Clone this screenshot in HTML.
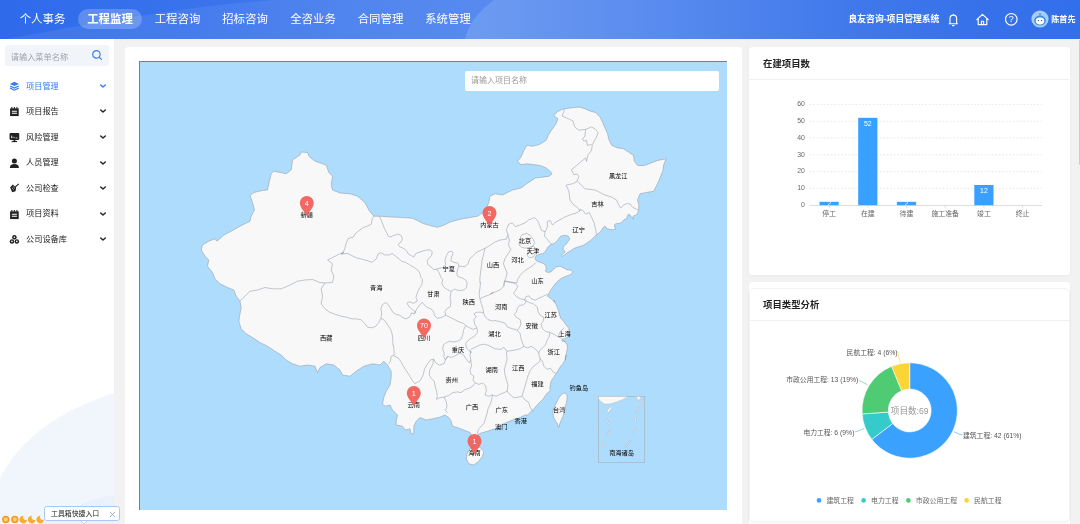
<!DOCTYPE html>
<html lang="zh-CN">
<head>
<meta charset="utf-8">
<title>良友咨询-项目管理系统</title>
<style>
*{box-sizing:border-box;margin:0;padding:0}
html,body{width:1080px;height:524px;overflow:hidden;background:#f2f2f2;font-family:"Liberation Sans","Noto Sans CJK SC",sans-serif;}
.abs{position:absolute}
#hdr{position:absolute;left:0;top:0;width:1080px;height:39.4px;overflow:hidden;background:#3a73ea}
#hdr svg{position:absolute;left:0;top:0}
.nav{position:absolute;top:0;height:39px;line-height:39.3px;color:#fff;font-size:11.4px;white-space:nowrap;transform:translateX(-50%);letter-spacing:0}
.pill{position:absolute;left:78.2px;top:9.3px;width:63.6px;height:20px;border-radius:10px;background:rgba(255,255,255,.22)}
.sys{position:absolute;left:848.5px;top:0;line-height:39px;color:#fff;font-weight:bold;font-size:8.8px;white-space:nowrap}
.uname{position:absolute;left:1051.2px;top:0;line-height:39px;color:#fff;font-weight:bold;font-size:8.1px;white-space:nowrap}
#side{position:absolute;left:0;top:39px;width:114px;height:485px;background:#fff;overflow:hidden}
.sbox{position:absolute;left:5.1px;top:6.2px;width:103.8px;height:20.6px;border-radius:3px;background:#f1f4f9}
.sbox span{position:absolute;left:5.7px;top:2.7px;line-height:20px;font-size:8.2px;color:#a0a3aa;white-space:nowrap}
.mi{position:absolute;left:25.8px;font-size:8.2px;color:#222;white-space:nowrap;line-height:12px}
.mi.act{color:#3a7bf0}
#main{position:absolute;left:124.9px;top:47.1px;width:617.3px;height:490px;background:#fff;border-radius:3.5px}
#map{position:absolute;left:139px;top:61px;width:588px;height:449px;background:#aedcfc;border-top:1px solid #7d7d7d;border-left:1px solid #7d7d7d;overflow:hidden}
.minput{position:absolute;left:464.8px;top:70.7px;width:253.7px;height:20.2px;background:#fff;border-radius:2px}
.minput span{position:absolute;left:6px;top:0.2px;line-height:20px;font-size:8px;color:#9a9a9a;white-space:nowrap}
.card{position:absolute;left:748.7px;width:321px;background:#fff;border-radius:3.5px;box-shadow:0 1px 3px rgba(0,0,0,.04)}
.ctitle{position:absolute;left:14px;font-size:9.4px;font-weight:bold;color:#222;white-space:nowrap;line-height:14px}
.sep{position:absolute;left:0;width:320px;height:1px;background:#f0f0f0}
#sb{position:absolute;left:1078.5px;top:40px;width:1.5px;height:125px;background:#cdcdcd;border-radius:1px 0 0 1px}
#sb i{display:none}
body>*{will-change:transform}
svg text{font-family:"Liberation Sans","Noto Sans CJK SC",sans-serif}
</style>
</head>
<body>
<!-- HEADER -->
<div id="hdr">
<svg width="1080" height="40" viewBox="0 0 1080 40">
<defs>
<linearGradient id="hg" x1="0" x2="1" y1="0" y2="0">
<stop offset="0" stop-color="#2e6aeb"/><stop offset="0.2" stop-color="#3a74ec"/><stop offset="0.43" stop-color="#4b81ee"/><stop offset="1" stop-color="#4b81ee"/>
</linearGradient>
<linearGradient id="hg2" gradientUnits="userSpaceOnUse" x1="465" x2="1080" y1="0" y2="0">
<stop offset="0" stop-color="#6e9bf1"/><stop offset="0.3" stop-color="#5a8cef"/><stop offset="0.62" stop-color="#4179eb"/><stop offset="0.85" stop-color="#3671ea"/><stop offset="1" stop-color="#326fea"/>
</linearGradient>
</defs>
<rect width="1080" height="40" fill="url(#hg)"/>
<path d="M0 40 C60 30 150 10 272 0 L494 0 L494 40 Z" fill="#fff" fill-opacity="0.07"/>
<path d="M494 0 Q469 18 465 40 L1080 40 L1080 0 Z" fill="url(#hg2)"/>
</svg>
<div class="pill"></div>
<div class="nav" style="left:42.5px">个人事务</div>
<div class="nav" style="left:110px;font-weight:bold">工程监理</div>
<div class="nav" style="left:177.5px">工程咨询</div>
<div class="nav" style="left:245px">招标咨询</div>
<div class="nav" style="left:313px">全咨业务</div>
<div class="nav" style="left:380.5px">合同管理</div>
<div class="nav" style="left:448px">系统管理</div>
<div class="sys">良友咨询-项目管理系统</div>
<svg style="left:945px;top:10px" width="80" height="20" viewBox="0 0 80 20" fill="none" stroke="#fff" stroke-width="1.15" stroke-linejoin="round" stroke-linecap="round">
<path d="M5 13.6 V8.4 a3.3 3.3 0 0 1 6.6 0 V13.6 M4.2 13.7 H12.4 M7.5 15.6 H9.1 M8.3 4.2 V5"/>
<path d="M31.8 9.6 L37.5 4.4 L43.2 9.6 M33.2 8.6 V14.6 H41.8 V8.6 M36.4 14.6 V11.2 H38.6 V14.6"/>
<circle cx="66.3" cy="9.3" r="5.8"/>
</svg>
<div class="abs" style="left:1007.3px;top:3.2px;width:8px;text-align:center;color:#fff;font-size:9px;line-height:32px">?</div>
<svg style="left:1031px;top:10.3px" width="18" height="18" viewBox="0 0 18 18">
<circle cx="9" cy="9" r="8.6" fill="#a8cdf8"/>
<ellipse cx="9" cy="10.6" rx="5.8" ry="5" fill="#3f8fe8"/>
<ellipse cx="9" cy="11" rx="4.2" ry="3.4" fill="#fff"/>
<circle cx="7.4" cy="10.6" r="0.7" fill="#345"/><circle cx="10.6" cy="10.6" r="0.7" fill="#345"/>
<circle cx="9" cy="4.2" r="1.2" fill="#5aa4f0"/>
</svg>
<div class="uname">陈首先</div>
</div>

<!-- SIDEBAR -->
<div id="side">
<svg class="abs" style="left:0;top:0" width="114" height="485" viewBox="0 0 114 485">
<path d="M0 485 L0 439 Q30 381 114 354 L114 485 Z" fill="#f1f6fd"/>
<path d="M40 485 C60 472 90 460 114 456 L114 485 Z" fill="#e9f1fc"/>
</svg>
<div class="sbox"><span>请输入菜单名称</span>
<svg class="abs" style="left:86.3px;top:4.2px" width="12" height="12" viewBox="0 0 12 12" fill="none" stroke="#3a7bf0" stroke-width="1.2"><circle cx="5.4" cy="5.4" r="3.7"/><path d="M8.2 8.2 L10.4 10.4" stroke-linecap="round"/></svg>
</div>
</div>
<svg class="abs" style="left:9.1px;top:80.85px" width="10.8" height="10.8" viewBox="0 0 12 12" fill="#3a7bf0"><path d="M6 0.8 L11 3.2 L6 5.6 L1 3.2 Z"/><path d="M1.2 5.5 L6 7.8 L10.8 5.5 M1.2 7.9 L6 10.2 L10.8 7.9" fill="none" stroke="#3a7bf0" stroke-width="1.3"/></svg>
<div class="mi act" style="top:80.55px">项目管理</div>
<svg class="abs" style="left:99.3px;top:81.85px" width="8" height="8" viewBox="0 0 8 8" fill="none" stroke="#3a7bf0" stroke-width="1.4" stroke-linecap="round" stroke-linejoin="round"><path d="M1.7 2.9 L4 5.1 L6.3 2.9"/></svg>
<svg class="abs" style="left:9.1px;top:106.40px" width="10.8" height="10.8" viewBox="0 0 12 12" fill="#222"><path d="M1.2 2.6 H10.8 V11.2 H1.2 Z"/><path d="M3.2 1.2 V3 M6 1.2 V3 M8.8 1.2 V3" stroke="#222" stroke-width="1.2"/><path d="M3.2 5.8 H8.8 M3.2 8 H8.8" stroke="#fff" stroke-width="1.2"/></svg>
<div class="mi" style="top:106.10px">项目报告</div>
<svg class="abs" style="left:99.3px;top:107.40px" width="8" height="8" viewBox="0 0 8 8" fill="none" stroke="#222" stroke-width="1.4" stroke-linecap="round" stroke-linejoin="round"><path d="M1.7 2.9 L4 5.1 L6.3 2.9"/></svg>
<svg class="abs" style="left:9.1px;top:131.95px" width="10.8" height="10.8" viewBox="0 0 12 12" fill="#222"><rect x="0.6" y="1" width="10.8" height="7.8" rx="1.2"/><path d="M3 10.6 H9" stroke="#222" stroke-width="1.3"/><path d="M5 8.6 H7 V10.4 H5 Z"/><path d="M2.8 6.8 V4 M4.4 6.8 V5 M6 6.8 V5.8 M7.4 6.6 H9.4" stroke="#fff" stroke-width="0.8"/></svg>
<div class="mi" style="top:131.65px">风险管理</div>
<svg class="abs" style="left:99.3px;top:132.95px" width="8" height="8" viewBox="0 0 8 8" fill="none" stroke="#222" stroke-width="1.4" stroke-linecap="round" stroke-linejoin="round"><path d="M1.7 2.9 L4 5.1 L6.3 2.9"/></svg>
<svg class="abs" style="left:9.1px;top:157.50px" width="10.8" height="10.8" viewBox="0 0 12 12" fill="#222"><circle cx="6" cy="3.4" r="2.8"/><path d="M1 11 Q1 6.8 6 6.8 Q11 6.8 11 11 Z"/></svg>
<div class="mi" style="top:157.20px">人员管理</div>
<svg class="abs" style="left:99.3px;top:158.50px" width="8" height="8" viewBox="0 0 8 8" fill="none" stroke="#222" stroke-width="1.4" stroke-linecap="round" stroke-linejoin="round"><path d="M1.7 2.9 L4 5.1 L6.3 2.9"/></svg>
<svg class="abs" style="left:9.1px;top:183.05px" width="10.8" height="10.8" viewBox="0 0 12 12" fill="#222"><path d="M1.2 5 L4.2 1.8 L8 5.4 L7.2 9.2 L3.6 10.4 Z"/><path d="M6.2 5.2 L10.8 1" stroke="#222" stroke-width="1.3" fill="none"/><path d="M3.2 5.4 L5.2 7.4 M4.6 4 L6.4 5.8" stroke="#fff" stroke-width="0.7"/></svg>
<div class="mi" style="top:182.75px">公司检查</div>
<svg class="abs" style="left:99.3px;top:184.05px" width="8" height="8" viewBox="0 0 8 8" fill="none" stroke="#222" stroke-width="1.4" stroke-linecap="round" stroke-linejoin="round"><path d="M1.7 2.9 L4 5.1 L6.3 2.9"/></svg>
<svg class="abs" style="left:9.1px;top:208.60px" width="10.8" height="10.8" viewBox="0 0 12 12" fill="#222"><path d="M1.2 2.6 H10.8 V11.2 H1.2 Z"/><path d="M3.2 1.2 V3 M6 1.2 V3 M8.8 1.2 V3" stroke="#222" stroke-width="1.2"/><path d="M3.2 5.8 H8.8 M3.2 8 H8.8" stroke="#fff" stroke-width="1.2"/></svg>
<div class="mi" style="top:208.30px">项目资料</div>
<svg class="abs" style="left:99.3px;top:209.60px" width="8" height="8" viewBox="0 0 8 8" fill="none" stroke="#222" stroke-width="1.4" stroke-linecap="round" stroke-linejoin="round"><path d="M1.7 2.9 L4 5.1 L6.3 2.9"/></svg>
<svg class="abs" style="left:9.1px;top:234.15px" width="10.8" height="10.8" viewBox="0 0 12 12" fill="#222"><circle cx="6" cy="3.6" r="2.5"/><circle cx="3.3" cy="8.2" r="2.5"/><circle cx="8.7" cy="8.2" r="2.5"/><circle cx="6" cy="3.6" r="0.9" fill="#fff"/><circle cx="3.3" cy="8.2" r="0.9" fill="#fff"/><circle cx="8.7" cy="8.2" r="0.9" fill="#fff"/></svg>
<div class="mi" style="top:233.85px">公司设备库</div>
<svg class="abs" style="left:99.3px;top:235.15px" width="8" height="8" viewBox="0 0 8 8" fill="none" stroke="#222" stroke-width="1.4" stroke-linecap="round" stroke-linejoin="round"><path d="M1.7 2.9 L4 5.1 L6.3 2.9"/></svg>
<svg class="abs" style="left:0;top:512px" width="50" height="12" viewBox="0 512 50 12">
<g fill="#f5992a"><circle cx="5.8" cy="519.4" r="3.7"/><circle cx="14.8" cy="519.4" r="3.7"/></g>
<g fill="#fcd05c"><circle cx="5.8" cy="519.4" r="2.1"/><circle cx="14.8" cy="519.4" r="2.1"/></g>
<g fill="#f8ac30">
<path d="M23.4 515.8 A3.8 3.8 0 1 0 27.0 519.4 A2.6 2.6 0 0 1 23.4 515.8 Z"/>
<path d="M31.9 515.8 A3.8 3.8 0 1 0 35.5 519.4 A2.6 2.6 0 0 1 31.9 515.8 Z"/>
<path d="M40.4 515.8 A3.8 3.8 0 1 0 44.0 519.4 A2.6 2.6 0 0 1 40.4 515.8 Z"/>
</g>
</svg>
<div class="abs" style="left:43.7px;top:506.3px;width:75.8px;height:15.2px;background:#fff;border:1px solid #a6c8f6;border-radius:2.5px"></div>
<div class="abs" style="left:50.8px;top:506.4px;line-height:15px;font-size:6.9px;color:#222;white-space:nowrap">工具箱快捷入口</div>
<svg class="abs" style="left:109px;top:510.6px" width="7" height="7" viewBox="0 0 7 7" stroke="#7d9fcb" stroke-width="0.8" fill="none"><path d="M0.9 0.9 L6.1 6.1 M6.1 0.9 L0.9 6.1"/></svg>
<svg class="abs" style="left:80px;top:520.6px" width="8" height="4" viewBox="0 0 8 4"><path d="M0.8 0 L4 2.8 L7.2 0" fill="#fff" stroke="#a6c8f6" stroke-width="0.8"/></svg>


<!-- MAIN -->
<div id="main"></div>
<div id="map"><svg class="abs" style="left:0;top:0" width="587" height="448" viewBox="0 0 587 448">
<g fill="#f8f8f8" stroke="#8f9ba8" stroke-width="0.55" stroke-linejoin="round">
<path d="M61.2 188.0 L62.5 183.0 L68.8 179.2 L75.0 176.8 L77.0 179.2 L83.8 173.0 L91.2 169.2 L100.0 164.2 L110.0 159.2 L111.2 154.2 L114.5 148.0 L112.5 140.5 L110.0 133.5 L113.8 130.5 L122.5 128.5 L127.5 128.0 L128.8 121.8 L131.2 111.8 L133.8 109.2 L146.2 111.8 L151.2 108.0 L152.5 98.0 L160.0 93.0 L161.2 90.0 L167.5 90.5 L168.8 94.2 L175.0 99.2 L186.2 103.0 L188.8 110.5 L192.5 114.2 L191.2 123.0 L192.5 128.0 L200.0 131.0 L210.0 131.8 L217.5 134.2 L225.0 140.5 L228.8 148.0 L233.8 154.2 L240.0 154.2 L250.0 155.0 L262.5 155.5 L270.0 156.0 L272.9 156.4 L277.4 158.6 L283.3 161.6 L290.8 163.8 L297.5 165.3 L304.2 163.1 L310.1 160.1 L317.6 157.9 L322.5 156.8 L337.5 154.2 L345.0 149.2 L348.8 140.5 L350.0 134.2 L355.0 131.8 L362.5 133.0 L372.5 128.0 L381.0 126.0 L385.2 122.8 L390.2 119.4 L395.3 116.1 L402.0 115.2 L408.7 114.4 L412.0 111.9 L410.4 109.4 L406.2 106.0 L400.3 103.5 L393.6 102.6 L386.9 101.8 L381.0 102.6 L377.6 99.3 L381.0 95.1 L383.5 89.2 L386.9 83.3 L392.7 84.2 L399.5 82.5 L406.2 78.3 L408.7 72.4 L412.0 67.4 L416.2 61.5 L417.9 56.5 L413.7 54.0 L417.1 49.8 L423.0 47.2 L430.5 45.9 L438.9 45.1 L443.9 46.4 L449.8 48.9 L455.7 50.6 L459.9 54.8 L462.4 59.8 L464.9 65.7 L467.5 71.6 L469.1 78.3 L471.7 83.3 L477.5 85.9 L483.4 86.7 L488.4 90.0 L493.5 93.4 L494.3 99.3 L497.7 103.5 L504.4 103.5 L511.1 101.0 L517.8 98.4 L526.2 96.8 L523.7 102.6 L522.9 108.5 L520.3 115.2 L517.8 121.1 L515.3 126.0 L513.8 129.2 L506.2 130.5 L500.0 131.8 L497.5 138.0 L498.8 142.6 L498.8 147.9 L497.6 151.0 L496.1 152.9 L493.4 154.0 L492.7 155.6 L493.4 157.1 L491.9 155.9 L490.4 153.3 L488.5 152.1 L487.3 154.0 L486.6 156.7 L483.9 157.8 L482.4 159.8 L479.7 161.3 L475.9 161.7 L474.4 162.8 L474.7 165.1 L475.9 167.0 L473.6 167.8 L470.2 167.4 L466.7 166.6 L466.0 165.1 L464.4 164.3 L462.9 165.9 L461.4 168.5 L459.1 170.8 L456.4 173.1 L453.7 175.4 L451.1 178.0 L449.8 179.0 L446.4 181.3 L443.0 183.6 L438.4 184.8 L433.8 186.5 L430.4 188.8 L426.9 191.1 L424.1 193.3 L421.8 194.5 L421.2 193.3 L424.1 191.1 L425.2 189.3 L422.9 187.6 L423.5 184.8 L425.8 182.5 L428.1 179.6 L429.8 176.7 L428.1 173.9 L424.7 173.3 L421.2 173.9 L418.9 176.2 L417.2 179.0 L414.4 181.3 L410.9 182.5 L408.1 184.8 L405.8 188.8 L402.9 191.6 L399.5 192.2 L396.0 193.9 L394.9 196.2 L396.0 198.5 L399.5 200.2 L403.5 201.4 L405.8 203.7 L406.3 207.1 L405.2 208.8 L407.5 210.5 L410.9 209.9 L413.8 207.1 L416.6 204.8 L420.1 204.2 L423.5 205.9 L426.9 207.7 L431.0 208.2 L432.7 209.9 L431.5 212.2 L428.1 213.4 L424.1 215.1 L420.7 216.8 L417.8 219.1 L415.5 221.4 L414.4 223.0 L410.0 229.2 L407.5 234.2 L411.2 236.8 L415.0 240.5 L413.8 238.0 L416.1 242.6 L418.4 248.3 L419.5 252.9 L420.7 256.3 L423.5 259.2 L425.8 262.6 L428.7 266.1 L429.2 269.5 L429.8 272.4 L428.1 274.6 L425.2 276.4 L422.4 277.5 L421.8 278.7 L424.7 279.8 L426.9 282.1 L427.5 284.9 L426.9 288.4 L426.4 291.8 L425.8 295.3 L425.2 298.0 L425.8 293.0 L425.3 297.6 L423.0 301.6 L420.1 305.0 L417.8 309.0 L415.5 312.5 L413.2 315.9 L411.0 319.3 L410.4 322.8 L409.8 326.2 L410.4 328.5 L407.5 330.8 L405.2 333.7 L403.5 336.5 L400.7 339.4 L397.8 342.2 L394.9 345.7 L392.1 348.5 L389.2 351.4 L387.5 353.0 L385.0 353.0 L380.0 355.5 L372.5 358.0 L366.2 360.5 L361.2 363.0 L355.0 366.8 L347.5 369.2 L341.2 371.0 L338.0 372.5 L337.0 378.0 L333.8 379.2 L332.0 374.2 L330.0 370.5 L323.8 368.0 L317.5 365.5 L312.5 364.2 L311.2 359.2 L308.8 355.5 L305.0 353.0 L298.8 355.5 L292.5 356.8 L286.2 358.0 L280.0 355.5 L276.2 359.2 L273.8 364.2 L273.8 371.8 L271.2 371.8 L270.0 366.8 L265.0 368.0 L262.5 364.2 L256.2 363.0 L256.2 359.2 L257.5 353.0 L252.5 348.0 L250.0 343.0 L245.0 344.2 L242.5 341.8 L243.8 335.5 L246.2 329.2 L250.0 323.0 L251.2 315.5 L251.2 309.2 L247.5 303.0 L243.8 299.2 L240.0 303.0 L232.5 301.8 L223.8 304.2 L216.2 309.2 L210.0 314.2 L202.5 313.0 L200.0 308.0 L193.8 303.0 L186.2 301.8 L180.0 305.5 L177.5 310.5 L175.0 304.2 L167.5 303.0 L160.0 304.2 L152.5 301.8 L146.2 298.0 L141.2 293.0 L135.0 289.2 L127.5 284.2 L120.0 280.5 L112.5 275.5 L106.2 271.8 L101.2 266.8 L98.8 259.2 L100.0 251.8 L101.2 245.5 L100.0 239.2 L96.2 234.2 L93.8 228.0 L87.5 225.5 L80.0 221.8 L75.0 216.8 L72.5 210.5 L67.5 204.2 L68.8 198.0 L65.0 194.2 Z"/>
<path d="M424.8 331.1 L426.7 332.5 L427.2 335.4 L426.5 340.2 L425.3 344.9 L424.4 349.7 L422.9 354.5 L421.0 358.8 L419.6 362.1 L419.1 365.0 L418.1 365.0 L417.7 362.1 L415.8 359.3 L413.9 355.9 L412.9 351.6 L413.4 347.8 L414.8 344.0 L416.7 340.2 L418.6 336.4 L421.0 333.0 L422.9 331.6 Z"/>
<path d="M333.8 385.0 L340.0 385.5 L343.8 389.2 L342.5 394.2 L338.8 399.2 L333.8 403.0 L328.8 401.8 L326.2 396.8 L327.5 390.5 L330.0 386.8 Z"/>
</g>
<g fill="none" stroke="#8f9ba8" stroke-width="0.55" stroke-linejoin="round">
<path d="M233.5 154.2 L232.0 157.9 L231.2 162.3 L226.0 164.6 L222.3 166.1 L218.6 169.0 L214.9 172.0 L213.4 175.0 L208.2 176.5 L206.0 181.7 L204.5 187.6 L201.5 192.1 L203.8 190.5"/>
<path d="M203.8 190.5 L201.5 192.1 L207.4 191.4 L211.9 193.6 L216.4 195.8 L222.3 197.3 L227.5 198.8 L232.0 200.3 L236.5 196.6 L237.9 192.1 L240.9 190.6 L244.6 192.9 L249.1 192.9 L252.1 191.4 L255.8 194.3 L259.5 197.3 L261.8 199.5 L265.5 200.3 L269.2 202.5 L272.9 204.8 L276.6 207.0 L279.6 210.7 L281.1 215.9 L282.6 217.5 L281.8 222.7 L278.9 227.1 L277.4 230.9 L275.9 235.3 L277.4 239.0 L273.7 241.3 L269.2 239.8 L267.0 241.3 L269.2 245.0 L272.9 248.0 L275.9 250.2 L274.4 251.7"/>
<path d="M239.4 154.2 L241.7 159.4 L243.9 165.3 L246.1 169.8 L248.4 174.2 L250.6 175.0 L253.6 173.5 L258.0 172.0 L261.0 173.5 L262.5 176.5 L261.0 180.2 L258.0 182.4 L259.5 184.7 L263.2 186.2 L266.2 188.4 L268.5 192.1 L271.4 193.6 L273.7 195.1 L275.9 191.4 L280.4 189.9 L284.8 188.4 L289.3 187.6 L292.3 189.9 L291.5 193.6 L289.3 195.8 L287.1 198.8 L287.8 202.5 L290.8 204.8 L293.8 207.7 L296.7 207.0"/>
<path d="M296.7 207.0 L302.7 205.5 L305.7 202.5 L304.9 198.1 L306.4 193.6 L308.6 189.9 L311.6 189.1 L313.1 191.4 L311.6 195.1 L310.9 198.8 L313.8 200.3 L317.6 201.0 L319.0 204.0 L317.6 207.7 L316.8 211.5 L317.6 214.4 L322.0 215.9 L325.7 218.1 L327.2 221.0 L327.2 221.2 L326.5 225.6 L324.3 227.9 L319.0 228.6 L314.6 227.1 L310.9 229.4"/>
<path d="M296.7 207.0 L299.0 210.7 L301.2 215.9 L302.7 217.5 L301.9 221.9 L304.2 225.6 L307.9 227.9 L310.9 229.4"/>
<path d="M319.0 204.0 L325.0 204.8 L328.0 201.8 L329.5 197.3 L332.4 194.3 L336.2 190.6 L340.6 188.4 L345.1 186.2 L350.3 183.2 L354.8 180.2 L360.0 178.0 L360.4 178.0 L366.4 177.2 L367.9 172.8 L366.4 167.6 L368.6 162.3 L372.3 160.9 L375.3 164.6 L379.8 163.1 L385.0 160.9 L388.7 157.9 L394.6 155.6 L397.6 158.6 L399.9 163.8 L401.3 168.3 L405.1 169.8 L407.3 165.3 L407.3 159.4 L410.3 158.6 L412.5 163.1 L415.5 160.1 L419.9 157.9 L425.1 154.9 L430.4 152.7 L435.6 151.2 L440.0 149.0"/>
<path d="M345.1 186.2 L343.6 192.1 L342.1 198.1 L341.4 204.0 L340.6 210.0 L339.9 215.9 L339.9 221.0 L340.6 220.4 L339.9 226.4 L339.1 232.3 L339.9 236.8"/>
<path d="M405.1 169.8 L404.3 174.2 L407.3 177.2 L409.5 180.2 L411.8 182.4"/>
<path d="M440.0 149.0 L440.0 147.2 L443.1 148.7 L445.7 152.1 L449.2 150.6 L451.5 155.2 L454.1 160.9 L456.4 170.8 L456.0 173.1"/>
<path d="M382.0 172.8 L386.5 171.3 L390.2 173.5 L393.2 177.2 L394.6 180.9 L393.2 183.9 L389.4 185.4 L385.7 186.2 L382.0 185.4 L379.0 183.2 L379.8 178.7 L380.5 175.0 L382.0 172.8"/>
<path d="M393.2 183.9 L395.4 186.2 L396.9 189.1 L395.4 192.1 L393.2 195.1 L389.4 195.8 L387.2 193.6 L387.9 189.9 L389.4 186.9 L393.2 183.9"/>
<path d="M367.9 172.8 L369.3 178.0 L368.6 183.2 L370.8 187.6 L367.9 192.1 L364.9 196.6 L363.4 201.8 L365.6 207.0 L367.1 211.5 L365.6 216.7 L364.1 221.0 L363.8 224.2"/>
<path d="M396.1 200.3 L393.2 203.3 L388.7 206.2 L384.2 209.2 L380.5 212.9 L377.5 217.4 L376.8 221.0 L364.6 219.0"/>
<path d="M274.4 251.7 L271.4 250.9 L269.9 254.7 L266.2 256.9 L262.5 255.4 L259.5 253.2 L255.8 252.4 L252.8 250.2 L250.6 246.5 L248.4 242.8 L245.4 240.5 L242.4 242.8 L240.9 246.5 L241.7 251.7 L240.9 256.2"/>
<path d="M240.9 256.2 L238.7 260.6 L235.7 264.3 L232.0 265.8 L227.5 265.1 L224.6 261.4 L220.8 257.6 L216.4 256.9 L211.9 256.9 L207.4 255.4 L203.0 254.7 L200.0 253.9 L197.5 253.0 L190.0 250.5 L185.0 246.8 L181.2 241.8 L182.5 234.2 L181.2 226.8 L185.0 221.0"/>
<path d="M100.0 239.2 L110.0 229.2 L117.5 228.0 L125.0 225.5 L132.5 226.8 L141.2 226.8 L150.0 223.0 L157.5 219.2 L165.0 218.0 L172.5 217.5 L180.0 220.5 L185.0 221.0"/>
<path d="M185.0 221.0 L192.5 220.5 L193.8 214.2 L191.2 208.0 L192.5 201.8 L187.5 198.0 L192.5 195.5 L200.0 191.8 L203.8 190.5"/>
<path d="M240.9 256.2 L244.6 258.4 L247.6 262.9 L250.6 267.3 L252.1 271.8 L252.8 277.0 L252.8 282.9 L253.4 283.0 L254.1 289.0 L254.1 293.4 L251.2 294.2 L250.4 299.4 L248.6 301.6"/>
<path d="M274.4 251.7 L276.6 247.2 L279.6 242.8 L282.6 240.5 L284.8 243.5 L287.8 245.7 L291.5 247.2 L293.8 250.2 L294.5 253.9 L297.5 256.2 L301.9 255.4 L305.7 253.2"/>
<path d="M305.7 253.2 L304.9 249.5 L307.1 246.5 L310.1 245.0 L310.9 240.5 L310.1 236.1 L310.9 230.9 L310.9 229.4"/>
<path d="M305.7 253.2 L310.1 255.4 L314.6 257.6 L319.0 259.9 L323.5 261.4 L325.7 263.6 L329.5 265.8 L333.2 267.3 L336.9 265.8"/>
<path d="M336.9 265.8 L334.7 262.1 L333.9 257.6 L336.2 254.7 L333.9 251.7 L336.9 250.2 L340.6 250.2 L343.6 250.9 L342.9 246.5 L341.4 242.0 L339.9 236.8"/>
<path d="M339.9 236.8 L344.3 234.6 L348.8 233.1 L353.3 230.1 L350.4 232.3 L354.9 230.1 L360.1 227.9 L363.8 224.2 L364.6 219.0"/>
<path d="M364.6 219.0 L369.8 220.4 L375.0 221.2 L377.9 224.2 L375.7 227.9 L373.5 231.6 L376.5 234.6 L380.2 236.8 L384.6 237.6"/>
<path d="M384.6 237.6 L386.1 234.6 L389.1 233.8 L391.3 236.8 L395.1 238.3 L398.8 236.1 L402.5 234.6 L405.5 233.1 L407.7 232.3"/>
<path d="M384.6 237.6 L386.1 240.5 L383.2 242.8 L379.4 243.5 L377.2 246.5 L376.5 250.2 L374.2 252.4 L376.5 255.4 L380.2 257.6 L380.9 262.1 L379.4 265.8 L377.2 268.1"/>
<path d="M343.6 250.9 L345.1 254.7 L348.1 257.6 L352.5 259.1 L354.9 258.4 L360.8 259.9 L365.3 261.4 L367.5 265.1 L372.0 266.6 L377.2 268.1"/>
<path d="M377.2 268.1 L380.2 271.8 L380.9 276.2 L382.4 280.7 L383.9 284.4"/>
<path d="M384.6 237.6 L389.1 240.5 L393.6 242.0 L397.3 245.0 L398.0 249.5 L400.3 253.2 L404.0 255.4 L403.2 259.1 L401.0 262.1 L402.5 266.6 L405.5 269.5 L409.9 270.3"/>
<path d="M409.9 270.3 L414.4 272.5 L418.1 274.8 L421.1 276.2 L423.3 278.5 L425.6 280.0"/>
<path d="M418.1 274.8 L419.6 271.0 L421.8 268.1 L424.1 265.8"/>
<path d="M409.9 270.3 L409.2 274.8 L407.0 278.5 L405.5 282.9 L402.5 285.9 L399.5 288.9 L398.8 291.0 L398.9 293.0 L400.1 296.4 L402.4 299.3"/>
<path d="M383.9 284.4 L387.6 285.9 L391.3 284.4 L395.1 286.7 L398.8 291.0"/>
<path d="M383.9 284.4 L380.2 286.7 L375.0 288.1 L366.8 289.3 L363.8 285.2 L360.8 287.4 L354.9 286.7 L348.9 283.7 L344.5 282.2 L340.0 282.9 L336.9 284.4 L331.0 287.4 L329.5 288.9"/>
<path d="M325.7 263.6 L323.5 268.1 L322.8 272.5 L321.3 277.0 L317.6 279.2 L313.1 280.0 L309.4 279.2 L306.4 280.7 L303.4 282.9 L302.7 287.4 L304.2 291.0 L304.0 295.6 L305.5 297.9 L307.7 294.2"/>
<path d="M336.9 265.8 L337.6 270.3 L334.7 274.0 L331.0 276.2 L328.0 278.5 L325.7 281.5 L326.5 285.9 L329.5 288.9 L331.0 291.0 L330.8 289.0 L330.0 293.4 L330.8 297.9"/>
<path d="M254.1 294.2 L257.9 295.6 L260.8 299.4 L263.1 303.8 L266.0 308.3 L269.0 312.8 L272.0 318.0 L275.0 321.7 L280.2 318.7 L283.2 312.8 L284.6 306.8 L287.6 301.6 L290.6 297.9 L293.6 297.1"/>
<path d="M293.6 297.1 L295.8 300.9 L299.5 303.1 L304.0 301.6 L305.5 297.9 L307.7 294.2 L311.4 295.6 L315.9 293.4 L320.4 291.2 L323.3 292.7 L326.3 297.1 L329.3 300.9 L330.8 297.9"/>
<path d="M293.6 297.1 L292.8 302.3 L289.9 307.6 L289.1 312.8 L291.3 316.5 L294.3 319.5 L295.1 323.9 L296.5 329.1 L297.3 333.6 L296.5 337.3 L299.5 335.8 L304.0 335.1"/>
<path d="M304.0 335.1 L308.5 333.6 L312.9 330.6 L317.4 329.9 L321.1 330.6 L324.8 327.6 L329.3 326.2 L333.0 323.9 L335.2 320.9"/>
<path d="M335.2 320.9 L333.0 318.0 L333.8 314.2 L330.8 312.0 L330.0 308.3 L331.5 303.8 L330.8 297.9"/>
<path d="M335.2 320.9 L339.0 322.4 L342.7 320.9 L345.7 323.9 L346.4 329.1 L344.9 332.9 L348.6 334.3 L352.4 332.9"/>
<path d="M352.4 332.9 L351.6 338.1 L350.1 342.5 L347.9 347.0 L347.1 351.5 L345.7 355.9 L344.2 361.0 L338.0 368.0 L337.5 371.8"/>
<path d="M352.4 332.9 L356.1 334.3 L360.5 332.1 L364.3 330.6 L367.2 329.1"/>
<path d="M367.2 329.1 L368.0 323.2 L366.5 318.0 L365.0 312.8 L364.3 307.6 L365.7 302.3 L367.2 297.1 L366.5 291.9 L366.8 289.4"/>
<path d="M367.2 329.1 L370.2 332.9 L373.9 335.8 L378.4 335.1 L382.1 334.3"/>
<path d="M382.1 334.3 L383.6 329.1 L385.1 323.9 L386.6 318.7 L388.1 313.5 L390.3 308.3 L393.3 304.6 L397.0 301.6 L400.0 299.4 L400.1 296.4"/>
<path d="M402.4 299.3 L404.1 304.5 L406.9 307.3 L410.4 306.2 L413.2 310.2 L416.1 311.3"/>
<path d="M382.1 334.3 L385.1 338.1 L388.8 340.3 L390.0 345.1 L393.0 349.5"/>
<path d="M304.0 335.1 L306.2 339.5 L307.0 344.0 L305.5 348.5 L307.7 350.7"/>
<path d="M424.6 47.7 L422.1 54.0 L428.0 56.5 L433.0 59.0 L434.7 64.9 L438.9 68.2 L445.6 67.4 L451.5 64.9 L455.7 67.4 L458.2 70.7 L455.7 76.6 L452.3 82.5 L451.5 88.4 L448.1 92.6 L446.5 99.3 L445.6 95.9 L440.6 100.1 L435.6 104.3 L431.4 107.7 L433.9 112.7 L437.2 111.9 L438.9 114.4 L437.2 118.6 L437.5 119.2"/>
<path d="M445.6 67.4 L444.8 74.9 L442.3 76.6 L443.9 79.1 L446.5 78.3 L447.3 83.3 L451.5 82.5"/>
<path d="M437.5 119.2 L445.0 126.8 L455.0 128.0 L465.0 133.0 L471.2 135.0 L476.6 138.0 L478.2 141.8 L480.5 146.0 L483.5 143.3 L487.3 141.4 L490.4 142.2 L492.7 145.3 L496.5 147.2 L498.4 147.9"/>
<path d="M437.5 119.2 L432.5 121.8 L426.2 123.0 L428.8 129.2 L430.0 138.0 L433.8 143.0 L437.5 145.5 L440.0 149.0"/>
</g>
<rect x="458.4" y="334.4" width="46.3" height="66.1" fill="none" stroke="#a8b2bc" stroke-width="0.7"/>
<g fill="#f8f8f8" stroke="#b4b4b4" stroke-width="0.4">
<path d="M458.4 334.4 L488.2 334.4 L482.8 337.5 L476.0 340.2 L469.8 342.0 L464.5 342.0 L460.7 339.5 L458.4 336.4 Z"/>
<path d="M495.8 334.4 L501.1 334.4 L498.9 339.0 Z"/>
<path d="M466.5 349.7 L470.2 344.8 L471.7 346.0 L468.6 350.3 Z"/>
</g>
<g stroke="#aab4be" stroke-width="1.5" stroke-linecap="round">
<path d="M466.8 357.0 L468.6 361.6"/>
<path d="M467.1 372.3 L470.6 368.0"/>
<path d="M462.5 380.7 L464.5 384.5"/>
<path d="M485.4 384.5 L490.0 378.7"/>
<path d="M493.2 370.7 L496.1 366.2"/>
<path d="M495.5 359.3 L495.8 354.7"/>
<path d="M495.8 350.1 L499.2 345.6"/>
<path d="M500.4 343.3 L503.7 337.9"/>
</g>
<g stroke="#f4f4f4" stroke-width="0.8" stroke-linecap="round">
<path d="M466.8 357.0 L468.6 361.6"/>
<path d="M467.1 372.3 L470.6 368.0"/>
<path d="M462.5 380.7 L464.5 384.5"/>
<path d="M485.4 384.5 L490.0 378.7"/>
<path d="M493.2 370.7 L496.1 366.2"/>
<path d="M495.5 359.3 L495.8 354.7"/>
<path d="M495.8 350.1 L499.2 345.6"/>
<path d="M500.4 343.3 L503.7 337.9"/>
</g>
<g font-size="6.2" fill="#000" text-anchor="middle">
<text x="166.8" y="155.3">新疆</text>
<text x="349.5" y="165.3">内蒙古</text>
<text x="478.2" y="116.0">黑龙江</text>
<text x="457.5" y="144.3">吉林</text>
<text x="438.8" y="170.3">辽宁</text>
<text x="385.0" y="181.1">北京</text>
<text x="393.0" y="191.1">天津</text>
<text x="377.5" y="199.6">河北</text>
<text x="353.0" y="205.3">山西</text>
<text x="308.8" y="209.1">宁夏</text>
<text x="397.5" y="221.1">山东</text>
<text x="293.5" y="234.1">甘肃</text>
<text x="328.8" y="242.1">陕西</text>
<text x="361.2" y="246.6">河南</text>
<text x="410.8" y="254.6">江苏</text>
<text x="391.8" y="266.1">安徽</text>
<text x="236.2" y="227.8">青海</text>
<text x="186.2" y="278.3">西藏</text>
<text x="284.0" y="277.8">四川</text>
<text x="354.5" y="274.1">湖北</text>
<text x="424.5" y="274.1">上海</text>
<text x="413.8" y="292.1">浙江</text>
<text x="318.0" y="289.6">重庆</text>
<text x="351.8" y="310.3">湖南</text>
<text x="378.2" y="307.8">江西</text>
<text x="397.5" y="324.1">福建</text>
<text x="311.8" y="319.6">贵州</text>
<text x="332.0" y="347.3">广西</text>
<text x="361.8" y="350.3">广东</text>
<text x="380.8" y="361.1">香港</text>
<text x="361.2" y="367.3">澳门</text>
<text x="419.2" y="349.8">台湾</text>
<text x="438.8" y="327.8">钓鱼岛</text>
<text x="273.8" y="345.3">云南</text>
<text x="334.5" y="393.3">海南</text>
<text x="481.5" y="393.3">南海诸岛</text>
</g>
<path d="M166.8 154.3 C165.2 150.2 159.8 145.5 159.8 140.9 A7 7 0 1 1 173.8 140.9 C173.8 145.5 168.3 150.2 166.8 154.3 Z" fill="#f1605a" fill-opacity="0.94"/>
<text x="166.8" y="143.8" font-size="7.2" fill="#fff" text-anchor="middle">4</text>
<path d="M349.5 164.3 C347.9 160.2 342.5 155.5 342.5 150.9 A7 7 0 1 1 356.5 150.9 C356.5 155.5 351.1 160.2 349.5 164.3 Z" fill="#f1605a" fill-opacity="0.94"/>
<text x="349.5" y="153.8" font-size="7.2" fill="#fff" text-anchor="middle">2</text>
<path d="M284.0 276.9 C282.4 272.7 277.0 268.1 277.0 263.5 A7 7 0 1 1 291.0 263.5 C291.0 268.1 285.6 272.7 284.0 276.9 Z" fill="#f1605a" fill-opacity="0.94"/>
<text x="284.0" y="266.4" font-size="7.2" fill="#fff" text-anchor="middle">70</text>
<path d="M273.8 344.4 C272.1 340.2 266.8 335.6 266.8 331.0 A7 7 0 1 1 280.8 331.0 C280.8 335.6 275.4 340.2 273.8 344.4 Z" fill="#f1605a" fill-opacity="0.94"/>
<text x="273.8" y="333.9" font-size="7.2" fill="#fff" text-anchor="middle">1</text>
<path d="M334.5 392.4 C332.9 388.2 327.5 383.6 327.5 379.0 A7 7 0 1 1 341.5 379.0 C341.5 383.6 336.1 388.2 334.5 392.4 Z" fill="#f1605a" fill-opacity="0.94"/>
<text x="334.5" y="381.9" font-size="7.2" fill="#fff" text-anchor="middle">1</text>
</svg></div>
<div class="minput"><span>请输入项目名称</span></div>

<!-- RIGHT CARDS -->
<div class="card" style="top:47px;height:228px">
<div class="ctitle" style="top:9.8px">在建项目数</div>
<div class="sep" style="top:32px"></div>
</div>
<div class="card" style="top:282px;height:260px"></div>
<div class="card" style="top:288px;height:234px;border:1px solid #f3f3f3;border-radius:5px">
<div class="ctitle" style="top:9px;left:13px">项目类型分析</div>
<div class="sep" style="top:31px;left:-1px"></div>
</div>
<svg class="abs" style="left:749px;top:80px" width="320" height="195" viewBox="749 80 320 195">
<text x="804.9" y="207.0" font-size="6.9" fill="#666" text-anchor="end">0</text>
<path d="M809.8 188.4 H1042" stroke="#dedede" stroke-width="0.7" stroke-dasharray="1.7 1.8"/>
<text x="804.9" y="190.2" font-size="6.9" fill="#666" text-anchor="end">10</text>
<path d="M809.8 171.6 H1042" stroke="#dedede" stroke-width="0.7" stroke-dasharray="1.7 1.8"/>
<text x="804.9" y="173.4" font-size="6.9" fill="#666" text-anchor="end">20</text>
<path d="M809.8 154.8 H1042" stroke="#dedede" stroke-width="0.7" stroke-dasharray="1.7 1.8"/>
<text x="804.9" y="156.6" font-size="6.9" fill="#666" text-anchor="end">30</text>
<path d="M809.8 138.0 H1042" stroke="#dedede" stroke-width="0.7" stroke-dasharray="1.7 1.8"/>
<text x="804.9" y="139.8" font-size="6.9" fill="#666" text-anchor="end">40</text>
<path d="M809.8 121.2 H1042" stroke="#dedede" stroke-width="0.7" stroke-dasharray="1.7 1.8"/>
<text x="804.9" y="123.0" font-size="6.9" fill="#666" text-anchor="end">50</text>
<path d="M809.8 104.4 H1042" stroke="#dedede" stroke-width="0.7" stroke-dasharray="1.7 1.8"/>
<text x="804.9" y="106.2" font-size="6.9" fill="#666" text-anchor="end">60</text>
<path d="M809.8 205.5 H1042" stroke="#d4d4d4" stroke-width="0.8"/>
<path d="M829.1 205.2 v2.6" stroke="#d0d0d0" stroke-width="0.7"/>
<text x="829.1" y="216.2" font-size="6.9" fill="#666" text-anchor="middle">停工</text>
<rect x="819.5" y="201.8" width="19.2" height="3.4" fill="#3aa0ff"/>
<clipPath id="cb0"><rect x="819.5" y="201.8" width="19.2" height="3.4"/></clipPath><text clip-path="url(#cb0)" x="829.1" y="206.2" font-size="6.9" fill="#fff" text-anchor="middle">2</text>
<path d="M867.8 205.2 v2.6" stroke="#d0d0d0" stroke-width="0.7"/>
<text x="867.8" y="216.2" font-size="6.9" fill="#666" text-anchor="middle">在建</text>
<rect x="858.2" y="117.8" width="19.2" height="87.4" fill="#3aa0ff"/>
<text x="867.8" y="125.5" font-size="6.9" fill="#fff" text-anchor="middle">52</text>
<path d="M906.5 205.2 v2.6" stroke="#d0d0d0" stroke-width="0.7"/>
<text x="906.5" y="216.2" font-size="6.9" fill="#666" text-anchor="middle">待建</text>
<rect x="896.9" y="201.8" width="19.2" height="3.4" fill="#3aa0ff"/>
<clipPath id="cb2"><rect x="896.9" y="201.8" width="19.2" height="3.4"/></clipPath><text clip-path="url(#cb2)" x="906.5" y="206.2" font-size="6.9" fill="#fff" text-anchor="middle">2</text>
<path d="M945.2 205.2 v2.6" stroke="#d0d0d0" stroke-width="0.7"/>
<text x="945.2" y="216.2" font-size="6.9" fill="#666" text-anchor="middle">施工准备</text>
<path d="M983.9 205.2 v2.6" stroke="#d0d0d0" stroke-width="0.7"/>
<text x="983.9" y="216.2" font-size="6.9" fill="#666" text-anchor="middle">竣工</text>
<rect x="974.3" y="185.0" width="19.2" height="20.2" fill="#3aa0ff"/>
<text x="983.9" y="192.7" font-size="6.9" fill="#fff" text-anchor="middle">12</text>
<path d="M1022.6 205.2 v2.6" stroke="#d0d0d0" stroke-width="0.7"/>
<text x="1022.6" y="216.2" font-size="6.9" fill="#666" text-anchor="middle">终止</text>
</svg>
<svg class="abs" style="left:749px;top:322px" width="320" height="200" viewBox="749 322 320 200">
<path d="M909.70 362.80 A47.7 47.7 0 1 1 871.80 439.46 L892.70 423.49 A21.4 21.4 0 1 0 909.70 389.10 Z" fill="#3aa1ff" stroke="#fff" stroke-width="0.6"/>
<path d="M871.80 439.46 A47.7 47.7 0 0 1 862.13 413.96 L888.36 412.05 A21.4 21.4 0 0 0 892.70 423.49 Z" fill="#36cbcb" stroke="#fff" stroke-width="0.6"/>
<path d="M862.13 413.96 A47.7 47.7 0 0 1 891.71 366.32 L901.63 390.68 A21.4 21.4 0 0 0 888.36 412.05 Z" fill="#4ecb73" stroke="#fff" stroke-width="0.6"/>
<path d="M891.71 366.32 A47.7 47.7 0 0 1 909.70 362.80 L909.70 389.10 A21.4 21.4 0 0 0 901.63 390.68 Z" fill="#fbd437" stroke="#fff" stroke-width="0.6"/>
<text x="909.7" y="413.7" font-size="8.6" fill="#999" text-anchor="middle">项目数:69</text>
<g fill="none" stroke-width="0.6">
<path d="M954 431.8 L960.4 434.6 L962.6 434.8" stroke="#3aa1ff"/>
<path d="M864.2 428.6 L857 431.4 L855 431.8" stroke="#36cbcb"/>
<path d="M867.6 384.6 L860.4 381.2 L858.8 380.2" stroke="#4ecb73"/>
<path d="M900.4 363.2 L898.4 355 L897.8 351.6" stroke="#fbd437"/>
</g>
<g font-size="6.8" fill="#555">
<text x="963" y="437.6">建筑工程: 42 (61%)</text>
<text x="854.4" y="434.8" text-anchor="end">电力工程: 6 (9%)</text>
<text x="858.4" y="382" text-anchor="end">市政公用工程: 13 (19%)</text>
<text x="897.6" y="354.8" text-anchor="end">民航工程: 4 (6%)</text>
</g>
<circle cx="819" cy="500.4" r="2.3" fill="#3aa1ff"/>
<text x="826.4" y="502.9" font-size="6.9" fill="#666">建筑工程</text>
<circle cx="863.6" cy="500.4" r="2.3" fill="#36cbcb"/>
<text x="871.0" y="502.9" font-size="6.9" fill="#666">电力工程</text>
<circle cx="908.4" cy="500.4" r="2.3" fill="#4ecb73"/>
<text x="915.8" y="502.9" font-size="6.9" fill="#666">市政公用工程</text>
<circle cx="966.6" cy="500.4" r="2.3" fill="#fbd437"/>
<text x="974.0" y="502.9" font-size="6.9" fill="#666">民航工程</text>
</svg>
<div id="sb"><i></i></div>
</body>
</html>
